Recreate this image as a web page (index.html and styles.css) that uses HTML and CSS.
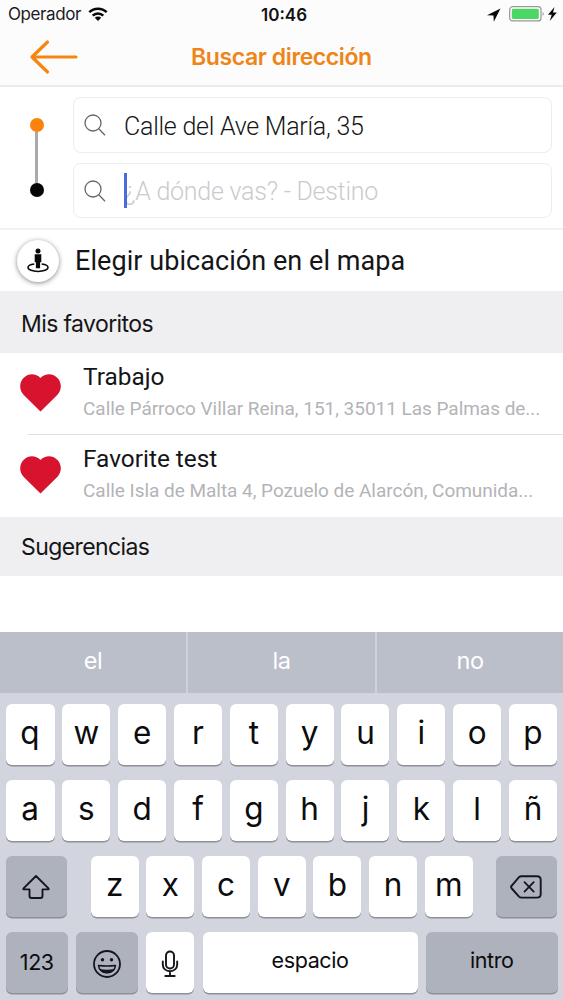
FILE: index.html
```html
<!DOCTYPE html>
<html lang="es">
<head>
<meta charset="utf-8">
<title>Buscar dirección</title>
<link rel="stylesheet" href="styles.css">
</head>
<body>
<div class="status">
  <div class="carrier"><span class="carrier-name">Operador</span>
    <svg class="wifi" width="20" height="14" viewBox="0 0 20 14"><g fill="none" stroke="#080808" stroke-width="2.5"><path d="M1.3 5.2a12.4 12.4 0 0 1 17.4 0"/><path d="M4.7 8.7a7.6 7.6 0 0 1 10.6 0"/></g><path d="M6.800 10.800a4.600 4.600 0 0 1 6.400 0L10 14z" fill="#080808"/></svg>
  </div>
  <span class="clock">10:46</span>
  <div class="power">
    <svg width="14" height="14" viewBox="0 0 14 14"><path d="M13.5.5 0 7.200l6.500.3.3 6.300z" fill="#080808"/></svg>
    <svg class="battery" width="36" height="16" viewBox="0 0 36 16"><rect x=".7" y=".7" width="31.300" height="14.200" rx="3" fill="#fff" stroke="#979797" stroke-width="1.200"/><rect x="2.800" y="2.700" width="27" height="10.200" rx="1.400" fill="#4bd763"/><path d="M33.600 5.400q2.200 2.400 0 4.800z" fill="#979797"/></svg>
    <svg class="bolt" width="9" height="14" viewBox="0 0 9 14"><path d="M6.500 0 0 7.800h3.700L1.800 14 8.800 5.500H5z" fill="#080808"/></svg>
  </div>
</div>
<header class="nav">
  <svg class="back" width="50" height="36" viewBox="0 0 50 36"><path d="M18.500 3 3 18l15.500 15M3 18h44" fill="none" stroke="#f6860f" stroke-width="3.200" stroke-linecap="round" stroke-linejoin="round"/></svg>
  <h1 class="title">Buscar dirección</h1>
</header>
<section class="route">
  <div class="track"><i class="dot start"></i><i class="line"></i><i class="dot end"></i></div>
  <div class="fields">
    <div class="field"><svg class="search" width="22" height="22" viewBox="0 0 22 22"><g fill="none" stroke="#66666a" stroke-width="1.300"><circle cx="9" cy="9" r="8"/><path d="m14.800 14.800 6.200 6.400"/></g></svg><span class="origin">Calle del Ave María, 35</span></div>
    <div class="field"><svg class="search" width="22" height="22" viewBox="0 0 22 22"><g fill="none" stroke="#66666a" stroke-width="1.300"><circle cx="9" cy="9" r="8"/><path d="m14.800 14.800 6.200 6.400"/></g></svg><i class="caret"></i><span class="destination">¿A dónde vas? - Destino</span></div>
  </div>
</section>
<section class="pick">
  <span class="pin"><svg width="24" height="26" viewBox="0 0 24 26"><circle cx="12" cy="3" r="2.500" fill="#080808"/><path d="M8.700 6.200h6.600v8h-1.200v6h-4.200v-6H8.700z" fill="#080808"/><path d="M8.300 16C4.500 16.500 2 17.700 2 19.500c0 2.300 4.500 3.900 10 3.900s10-1.600 10-3.900c0-1.800-2.500-3-6.300-3.500" fill="none" stroke="#080808" stroke-width="1.500"/></svg></span>
  <span class="pick-label">Elegir ubicación en el mapa</span>
</section>
<h2 class="heading favs">Mis favoritos</h2>
<ul class="list">
  <li class="row"><svg class="heart" width="41" height="38" viewBox="0 0 41 38"><path d="M20.500 37.500 4 21.300C-1 16.400-1.100 8.400 3.800 3.700 8.500-.9 15.700-1 20.500 4c4.800-5 12-4.900 16.700-.3 4.900 4.700 4.800 12.700-.2 17.600z" fill="#d8132e"/></svg><div class="entry"><span class="name">Trabajo</span><span class="addr">Calle Párroco Villar Reina, 151, 35011 Las Palmas de...</span></div></li>
  <li class="row"><svg class="heart" width="41" height="38" viewBox="0 0 41 38"><path d="M20.500 37.500 4 21.300C-1 16.400-1.100 8.400 3.800 3.700 8.500-.9 15.700-1 20.500 4c4.800-5 12-4.900 16.700-.3 4.900 4.700 4.800 12.700-.2 17.600z" fill="#d8132e"/></svg><div class="entry"><span class="name">Favorite test</span><span class="addr">Calle Isla de Malta 4, Pozuelo de Alarcón, Comunida...</span></div></li>
</ul>
<h2 class="heading sugs">Sugerencias</h2>
<section class="keyboard">
  <div class="predict"><span>el</span><span>la</span><span>no</span></div>
  <div class="keys">
    <div class="krow ten"><b>q</b><b>w</b><b>e</b><b>r</b><b>t</b><b>y</b><b>u</b><b>i</b><b>o</b><b>p</b></div>
    <div class="krow ten"><b>a</b><b>s</b><b>d</b><b>f</b><b>g</b><b>h</b><b>j</b><b>k</b><b>l</b><b>ñ</b></div>
    <div class="krow third">
      <b class="dark shift"><svg width="28" height="26" viewBox="0 0 28 26"><path d="M14 2 1.500 14.400q-.6 1 .6 1H7.500V22q0 2 2 2h9q2 0 2-2v-6.600h5.400q1.200 0 .6-1z" fill="none" stroke="#14161c" stroke-width="1.900" stroke-linejoin="round"/></svg></b>
      <b>z</b><b>x</b><b>c</b><b>v</b><b>b</b><b>n</b><b>m</b>
      <b class="dark erase"><svg width="32" height="24" viewBox="0 0 32 24"><path d="M11.500 1.200H27q3.700 0 3.700 3.700v14q0 3.700-3.700 3.700H11.500q-1.500 0-2.500-1L1.800 13.500q-1.400-1.500 0-3L9 2.200q1-1 2.500-1z" fill="none" stroke="#14161c" stroke-width="1.900"/><path d="m14.500 7.200 9.200 9.400m0-9.400-9.200 9.400" stroke="#14161c" stroke-width="1.800" stroke-linecap="round"/></svg></b>
    </div>
    <div class="krow fourth">
      <b class="dark word num">123</b>
      <b class="dark"><svg width="30" height="30" viewBox="0 0 30 30"><circle cx="15" cy="15" r="13" fill="none" stroke="#14161c" stroke-width="1.800"/><circle cx="10.500" cy="10.700" r="1.700" fill="#14161c"/><circle cx="19.500" cy="10.700" r="1.700" fill="#14161c"/><path d="M6.500 16.500q8.500 1 17 0-1 7.300-8.500 7.300t-8.500-7.300z" fill="none" stroke="#14161c" stroke-width="1.500" stroke-linejoin="round"/><path d="M7.600 20q7.400 1.300 14.800 0-2 4.300-7.400 4.300T7.600 20z" fill="#14161c"/></svg></b>
      <b><svg width="18" height="28" viewBox="0 0 18 28"><g fill="none" stroke="#14161c" stroke-width="1.900"><rect x="5" y="1.500" width="8" height="17" rx="4"/><path d="M1.800 11.500v3.300a7.200 6.500 0 0 0 14.400 0v-3.300M9 21.300v4.400M4.300 26h9.400" stroke-linecap="round"/></g></svg></b>
      <b class="word space">espacio</b>
      <b class="dark word intro">intro</b>
    </div>
  </div>
</section>
</body>
</html>
```
FILE: styles.css
```css
* { box-sizing: border-box; }
body { margin: 0; width: 563px; height: 1000px; overflow: hidden; background: #fff; color: #151517; font-family: Roboto, sans-serif; display: flex; flex-direction: column; }
body > * { flex: none; }
svg { display: block; flex: none; }

/* Status bar */
.status { height: 28px; background: #fdfcfd; display: grid; grid-template-columns: 1fr auto 1fr; font-family: Inter, sans-serif; font-size: 17px; line-height: 29px; color: #1b1b1d; }
.carrier { display: flex; align-items: center; gap: 8px; padding-left: 8px; }
.carrier-name { letter-spacing: -0.4px; }
.wifi { margin: -1px 0 0 -1px; }
.clock { font-weight: 600; letter-spacing: 0; padding: 1px 0 0 5px; line-height: 28px; color: #111; }
.power { display: flex; justify-content: flex-end; align-items: center; padding-right: 6px; }
.battery { margin-left: 8px; margin-top: -1px; }
.bolt { margin-left: 3px; margin-top: -1px; }

/* Navigation bar */
.nav { height: 59px; background: #fdfcfd; border-bottom: 2px solid #ececef; display: grid; grid-template-columns: 191px 1fr; align-items: center; }
.back { margin-left: 29px; }
.title { margin: 0; font: 600 23px/30px Inter, sans-serif; letter-spacing: -0.4px; color: #ee8519; white-space: nowrap; }

/* Route fields */
.route { height: 143px; border-bottom: 2px solid #f1f0f3; display: flex; padding-top: 10px; }
.track { width: 73px; display: flex; flex-direction: column; align-items: center; padding-top: 21px; }
.dot { width: 14px; height: 14px; border-radius: 50%; flex: none; }
.start { background: #fb830d; }
.end { background: #050507; }
.line { width: 3px; height: 51px; background: #aaa; }
.fields { width: 479px; display: flex; flex-direction: column; gap: 10px; }
.field { height: 56px; border: 1.5px solid #edecef; border-radius: 8px; display: flex; align-items: center; padding-left: 10px; font-size: 25px; font-weight: 300; letter-spacing: -0.25px; white-space: nowrap; position: relative; }
.field:last-child { height: 55px; }
.origin, .destination { line-height: 35px; margin-left: 18px; padding-top: 2px; }
.destination { color: #cdcace; }
.caret { position: absolute; left: 50px; top: 9px; width: 3px; height: 35px; background: #4b6bdc; }

/* Map picker */
.pick { height: 61px; display: flex; align-items: center; padding-left: 17px; }
.pin { width: 42px; height: 42px; border-radius: 50%; background: #fff; box-shadow: 0 1px 5px #0007; display: grid; place-items: center; }
.pick-label { margin-left: 16px; font-size: 27px; letter-spacing: 0.06px; white-space: nowrap; }

/* Favourites */
.heading { margin: 0; padding-left: 21px; background: #efeef1; font: 400 23px/1 Inter, sans-serif; letter-spacing: -0.6px; display: flex; align-items: center; }
.favs { height: 62px; padding-top: 4px; }
.sugs { height: 59px; padding-top: 2px; }
.list { list-style: none; margin: 0; padding: 0; }
.row { height: 82px; display: flex; padding-left: 20px; position: relative; }
.row:first-child::after { content: ""; position: absolute; left: 28px; right: 0; bottom: 0; height: 1px; background: #dfdfe1; }
.heart { margin-top: 21px; }
.entry { margin-left: 22px; display: flex; flex-direction: column; white-space: nowrap; }
.name { font-size: 24.4px; line-height: 30px; margin-top: 9px; }
.addr { font-size: 19px; line-height: 24px; margin-top: 5px; letter-spacing: -0.03px; color: #b4b3b7; }

/* Keyboard */
.keyboard { margin-top: auto; height: 368px; background: #d2d5dd; }
.predict { height: 61px; background: #babfc9; display: grid; grid-template-columns: 186px 189px 188px; font: 400 23.5px/57px Inter, sans-serif; letter-spacing: -0.4px; color: #fff; text-align: center; }
.predict span + span { border-left: 2px solid #cdd1d8; }
.keys { display: flex; flex-direction: column; gap: 15.2px; padding: 10.5px 5.5px 0; }
.krow { display: grid; height: 61px; justify-content: start; column-gap: 7.83px; }
.ten { grid-template-columns: 49px repeat(9, 48px); }
.third { grid-template-columns: 77.5px repeat(7, 48px) 76px; column-gap: 7.7px; }
.fourth { grid-template-columns: 62.5px 62px 48px 215px 132px; column-gap: 8.2px; }
.krow b { background: #fff; border-radius: 6px; box-shadow: 0 1.5px 0 #8e9097; display: flex; align-items: center; justify-content: center; font: 400 31.5px/1 Inter, sans-serif; color: #0c0c0e; padding-bottom: 2px; }
.third b { padding-bottom: 3px; }
.krow b.dark { background: #adb2bd; }
.krow .shift { width: 61px; }
.krow .erase { width: 61px; justify-self: end; }
.krow b:has(svg) { padding: 2px 0 0; }
.krow b.word { font-size: 21.5px; font-weight: 400; letter-spacing: -0.4px; padding-bottom: 3px; }
.krow b.num { padding-bottom: 0; }
```
